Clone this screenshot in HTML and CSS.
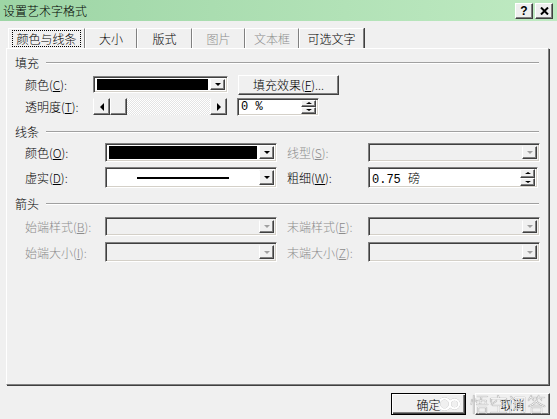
FILE: index.html
```html
<!DOCTYPE html>
<html lang="zh-CN">
<head>
  <meta charset="UTF-8" />
  <title>设置艺术字格式</title>
  <link rel="stylesheet" href="styles.css">
</head>
<body>
  <div class="titlebar">
    <span class="title">设置艺术字格式</span>
    <div class="title-buttons">
      <span class="tbtn help">?</span>
      <span class="tbtn">
        <svg width="9" height="8" viewBox="0 0 9 8"><path d="M1 0.5 L8 7.5 M8 0.5 L1 7.5" stroke="#000" stroke-width="2"/></svg>
      </span>
    </div>
  </div>

  <div class="tabs">
    <div class="tab w77"><span class="focus">颜色与线条</span></div>
    <div class="tab w52">大小</div>
    <div class="tab w55">版式</div>
    <div class="tab w53 off">图片</div>
    <div class="tab w54 off">文本框</div>
    <div class="tab w65">可选文字</div>
  </div>

  <div class="panel">
    <div class="group-title"><span>填充</span><i class="rule"></i></div>
    <div class="row mt5">
      <span class="lbl w68">颜色(<u>C</u>):</span>
      <div class="combo short"><div class="swatch"></div><span class="drop"></span></div>
      <button class="btn effect">填充效果(<u>F</u>)...</button>
    </div>
    <div class="row mt3">
      <span class="lbl w68">透明度(<u>T</u>):</span>
      <div class="scroll">
        <span class="sbtn"><i class="arr-left"></i></span>
        <span class="sbtn"></span>
        <span class="track"></span>
        <span class="sbtn"><i class="arr-right"></i></span>
      </div>
      <div class="spin short-spin">
        <span class="val">0 %</span>
        <span class="arrows"><span><i class="arr-up"></i></span><span><i class="arr-down"></i></span></span>
      </div>
    </div>

    <div class="group-title mt9"><span>线条</span><i class="rule"></i></div>
    <div class="row mt4">
      <span class="lbl w80">颜色(<u>O</u>):</span>
      <div class="combo wide"><div class="swatch"></div><span class="drop"></span></div>
      <span class="lbl w81 off">线型(<u>S</u>):</span>
      <div class="combo wide off"><div class="blank"></div><span class="drop"></span></div>
    </div>
    <div class="row mt5 tall">
      <span class="lbl w80">虚实(<u>D</u>):</span>
      <div class="combo wide"><div class="blank"><i class="sample"></i></div><span class="drop"></span></div>
      <span class="lbl w81">粗细(<u>W</u>):</span>
      <div class="spin wide-spin">
        <span class="val">0.75 磅</span>
        <span class="arrows"><span><i class="arr-up"></i></span><span><i class="arr-down"></i></span></span>
      </div>
    </div>

    <div class="group-title mt9"><span>箭头</span><i class="rule"></i></div>
    <div class="row mt6">
      <span class="lbl w80 off">始端样式(<u>B</u>):</span>
      <div class="combo wide off"><div class="blank"></div><span class="drop"></span></div>
      <span class="lbl w81 off">末端样式(<u>E</u>):</span>
      <div class="combo wide off"><div class="blank"></div><span class="drop"></span></div>
    </div>
    <div class="row mt6 tall20">
      <span class="lbl w80 off">始端大小(<u>I</u>):</span>
      <div class="combo wide off"><div class="blank"></div><span class="drop"></span></div>
      <span class="lbl w81 off">末端大小(<u>Z</u>):</span>
      <div class="combo wide off"><div class="blank"></div><span class="drop"></span></div>
    </div>
  </div>

  <div class="actions">
    <button class="btn default">确定</button>
    <button class="btn">取消</button>
  </div>

  <div class="watermark">
    <svg width="24" height="16" viewBox="0 0 24 16"><path d="M10 8 a5.5 5.5 0 1 1 0 -0.1 M10 8 a4.5 4.5 0 1 0 9 0 a4.5 4.5 0 1 0 -9 0" fill="none" stroke="#fff" stroke-width="2.4"/></svg>
    <span>悟空问答</span>
  </div>
</body>
</html>
```

FILE: styles.css
```css
html, body {
  margin: 0;
  padding: 0;
}

body {
  width: 557px;
  height: 419px;
  position: relative;
  overflow: hidden;
  background: #f0f0f0;
  color: #000;
  font-family: "Noto Sans CJK SC", "Liberation Sans", sans-serif;
  font-size: 12px;
  font-weight: 300;
}

u {
  text-decoration: underline;
}

/* title bar */
.titlebar {
  height: 21px;
  display: flex;
  align-items: center;
  justify-content: space-between;
  padding: 0 4px 0 3px;
  background: linear-gradient(to right, #9dd5a5, #bfeac2);
}

.title {
  line-height: 21px;
}

.title-buttons {
  display: flex;
  gap: 2px;
}

.tbtn {
  width: 18px;
  height: 16px;
  box-sizing: border-box;
  display: flex;
  align-items: center;
  justify-content: center;
  background: #efefef;
  border: 1px solid;
  border-color: #fff #404040 #404040 #fff;
  box-shadow: inset -1px -1px 0 #808080;
}

.tbtn.help {
  font-family: "Liberation Sans", sans-serif;
  font-weight: bold;
  font-size: 12px;
}

/* tabs */
.tabs {
  display: flex;
  height: 20px;
  margin-top: 7px;
  padding-left: 8px;
}

.tab {
  height: 20px;
  box-sizing: border-box;
  display: flex;
  align-items: center;
  justify-content: center;
  border-left: 1px solid #fff;
  border-top: 1px solid #fff;
  border-right: 1px solid #808080;
  box-shadow: 1px 0 0 #404040;
}

.tab.off { color: #8c8c8c; }

.focus {
  outline: 1px dotted #000;
  padding: 0 3px;
  line-height: 15px;
}

.w77 { width: 77px; }
.w52 { width: 52px; }
.w55 { width: 55px; }
.w53 { width: 53px; }
.w54 { width: 54px; }
.w65 { width: 65px; }

/* main panel */
.panel {
  height: 337px;
  margin: 0 8px 0 6px;
  box-sizing: border-box;
  padding: 7px 9px 0 8px;
  border-left: 1px solid #fff;
  border-top: 1px solid #fff;
  border-right: 1px solid #808080;
  border-bottom: 1px solid #808080;
  box-shadow: 1px 1px 0 #404040;
}

.group-title {
  display: flex;
  align-items: center;
  height: 14px;
  line-height: 14px;
}

.rule {
  flex: 1;
  height: 0;
  margin-left: 7px;
  border-top: 1px solid #a0a0a0;
  border-bottom: 1px solid #fff;
}

.row {
  display: flex;
  align-items: center;
  height: 19px;
  padding-left: 10px;
}

.row.tall { height: 21px; }
.row.tall20 { height: 20px; }

.mt3 { margin-top: 3px; }
.mt4 { margin-top: 4px; }
.mt5 { margin-top: 5px; }
.mt6 { margin-top: 6px; }
.mt9 { margin-top: 9px; }

.lbl {
  flex: none;
  white-space: nowrap;
}

.lbl.off { color: #8c8c8c; }

.w68 { width: 68px; }
.w80 { width: 80px; }
.w81 { width: 81px; margin-left: 10px; }

/* combo boxes */
.combo {
  flex: none;
  box-sizing: border-box;
  height: 100%;
  display: flex;
  align-items: stretch;
  gap: 2px;
  padding: 2px 2px 2px 3px;
  background: #fff;
  border: 1px solid;
  border-color: #808080 #fff #fff #808080;
  box-shadow: inset 1px 1px 0 #404040, inset -1px -1px 0 #d4d0c8;
}

.combo.short { width: 135px; height: 17px; }
.combo.wide { width: 172px; }
.combo.off { background: #f0f0f0; }

.swatch {
  flex: 1;
  background: #000;
}

.blank {
  flex: 1;
  display: flex;
  align-items: center;
  justify-content: center;
}

.sample {
  width: 92px;
  height: 2px;
  background: #000;
}

.drop {
  width: 15px;
  box-sizing: border-box;
  display: flex;
  align-items: center;
  justify-content: center;
  background: #f0f0f0;
  border: 1px solid;
  border-color: #f0f0f0 #404040 #404040 #fff;
  box-shadow: inset -1px -1px 0 #808080;
}

.drop::after {
  content: "";
  border-left: 3px solid transparent;
  border-right: 3px solid transparent;
  border-top: 3px solid #000;
}

.combo.off .drop::after { border-top-color: #a0a0a0; }

/* scrollbar */
.scroll {
  flex: none;
  display: flex;
  width: 134px;
  height: 17px;
}

.track {
  flex: 1;
  background: repeating-conic-gradient(#fff 0 25%, #e4e4e4 0 50%) 0 0 / 2px 2px;
}

.sbtn {
  width: 17px;
  box-sizing: border-box;
  display: flex;
  align-items: center;
  justify-content: center;
  background: #f0f0f0;
  border: 1px solid;
  border-color: #f0f0f0 #404040 #404040 #fff;
  box-shadow: inset -1px -1px 0 #808080;
}

.arr-left {
  border-top: 4px solid transparent;
  border-bottom: 4px solid transparent;
  border-right: 4px solid #000;
}

.arr-right {
  border-top: 4px solid transparent;
  border-bottom: 4px solid transparent;
  border-left: 4px solid #000;
}

/* spin fields */
.spin {
  flex: none;
  box-sizing: border-box;
  height: 100%;
  display: flex;
  background: #fff;
  border: 1px solid;
  border-color: #808080 #fff #fff #808080;
  box-shadow: inset 1px 1px 0 #404040, inset -1px -1px 0 #d4d0c8;
  padding: 1px 2px 1px 1px;
}

.short-spin { width: 82px; height: 18px; margin-left: 10px; }
.wide-spin { width: 170px; }

.val {
  flex: 1;
  padding-left: 2px;
  display: flex;
  align-items: center;
  font-family: "Liberation Mono", "Noto Sans CJK SC", monospace;
}

.arrows {
  width: 15px;
  display: flex;
  flex-direction: column;
}

.arrows span {
  flex: 1;
  box-sizing: border-box;
  display: flex;
  align-items: center;
  justify-content: center;
  background: #f0f0f0;
  border: 1px solid;
  border-color: #fff #404040 #404040 #fff;
  box-shadow: inset -1px -1px 0 #808080;
}

.arr-up {
  border-left: 3px solid transparent;
  border-right: 3px solid transparent;
  border-bottom: 2px solid #000;
}

.arr-down {
  border-left: 3px solid transparent;
  border-right: 3px solid transparent;
  border-top: 2px solid #000;
}

/* push buttons */
.btn {
  font: inherit;
  color: #000;
  padding: 0;
  box-sizing: border-box;
  background: #f0f0f0;
  border: 1px solid;
  border-color: #fff #404040 #404040 #fff;
  box-shadow: inset -1px -1px 0 #808080;
}

.btn.effect {
  width: 101px;
  height: 20px;
  margin-left: 10px;
}

.actions {
  display: flex;
  justify-content: flex-end;
  gap: 9px;
  margin-top: 8px;
  padding-right: 7px;
}

.actions .btn {
  width: 75px;
  height: 22px;
}

.btn.default {
  border-color: #000;
  box-shadow: inset 1px 1px 0 #fff, inset -1px -1px 0 #404040, inset -2px -2px 0 #808080;
}

/* watermark over the buttons */
.watermark {
  position: absolute;
  left: 440px;
  top: 390px;
  display: flex;
  align-items: center;
  gap: 6px;
  color: rgba(255, 255, 255, 0.92);
  font-size: 19px;
  text-shadow: 0 0 1px rgba(0, 0, 0, 0.45);
  filter: drop-shadow(0 0 0.5px rgba(0, 0, 0, 0.4));
}
```
